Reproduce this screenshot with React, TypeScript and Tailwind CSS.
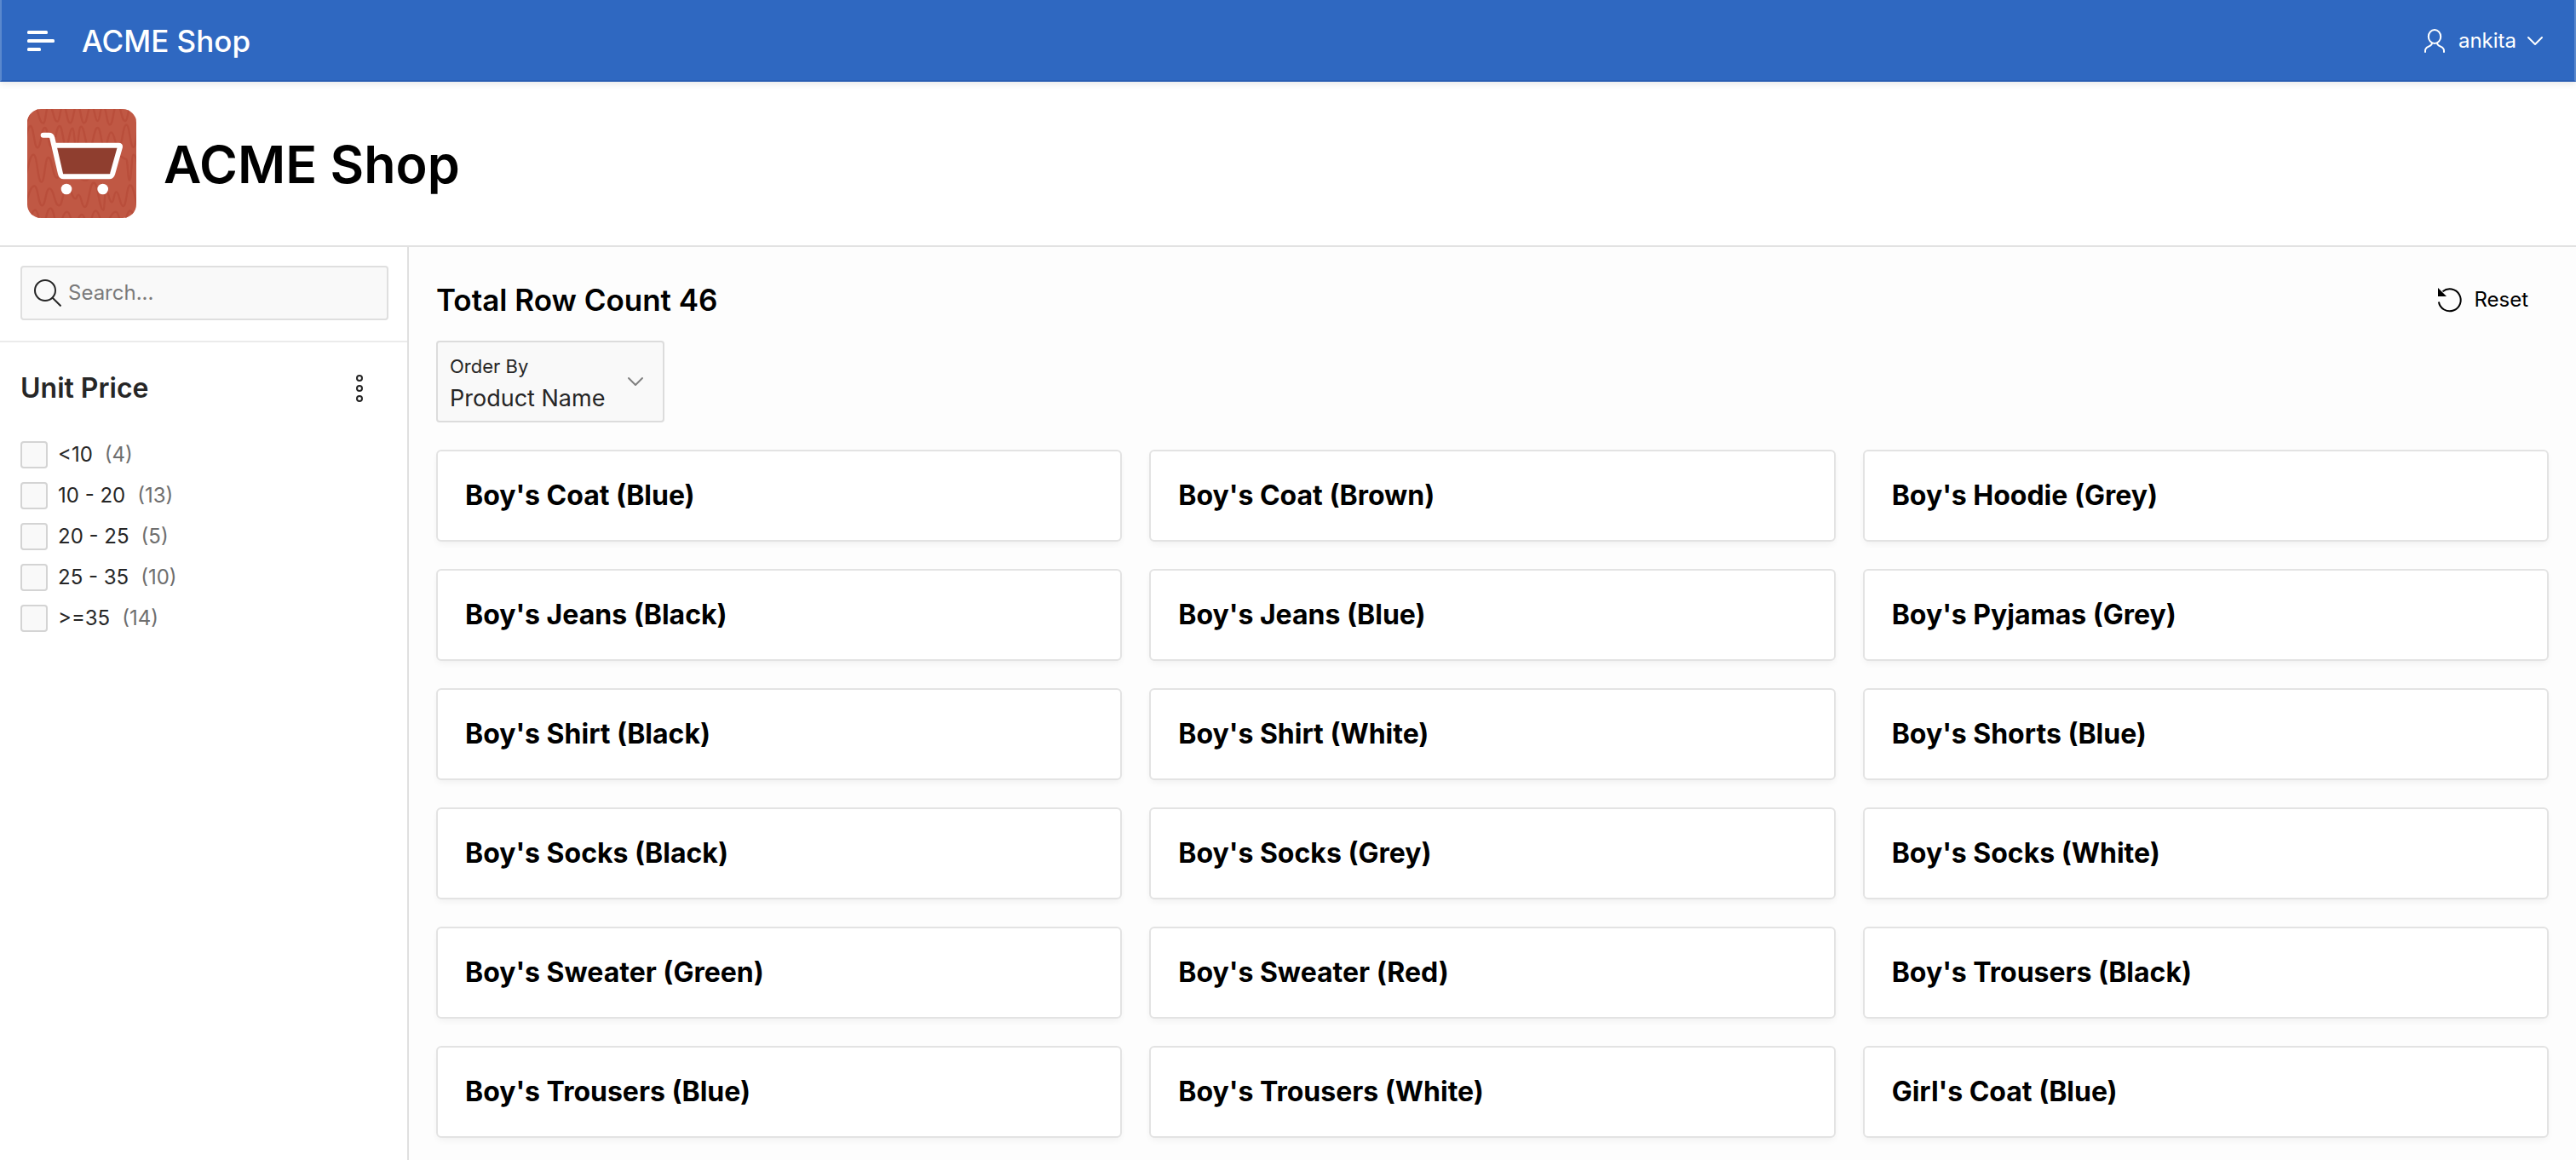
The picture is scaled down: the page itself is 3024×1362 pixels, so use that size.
const products = [
  "Boy's Coat (Blue)",
  "Boy's Coat (Brown)",
  "Boy's Hoodie (Grey)",
  "Boy's Jeans (Black)",
  "Boy's Jeans (Blue)",
  "Boy's Pyjamas (Grey)",
  "Boy's Shirt (Black)",
  "Boy's Shirt (White)",
  "Boy's Shorts (Blue)",
  "Boy's Socks (Black)",
  "Boy's Socks (Grey)",
  "Boy's Socks (White)",
  "Boy's Sweater (Green)",
  "Boy's Sweater (Red)",
  "Boy's Trousers (Black)",
  "Boy's Trousers (Blue)",
  "Boy's Trousers (White)",
  "Girl's Coat (Blue)",
];

const priceRanges = [
  { label: "<10", count: 4 },
  { label: "10 - 20", count: 13 },
  { label: "20 - 25", count: 5 },
  { label: "25 - 35", count: 10 },
  { label: ">=35", count: 14 },
];

type Point = [number, number];

// Turning points of the hand-drawn waves behind the cart.
const waves: Point[][] = [
  [[30, 70], [58, 10], [92, 74], [112, 10], [142, 68], [162, 10], [187, 73], [212, 8], [236, 73], [262, 10], [284, 66], [302, 10], [327, 79], [352, 8], [381, 66], [402, 10], [430, 70]],
  [[20, 150], [47, 84], [72, 160], [98, 90], [122, 158], [150, 84], [172, 150], [196, 92], [208, 158], [225, 86], [254, 160], [284, 90], [308, 158], [331, 106], [358, 158], [385, 80], [410, 158], [430, 90]],
  [[20, 270], [58, 185], [86, 281], [110, 195], [140, 266], [170, 200], [240, 275], [300, 200], [360, 190], [384, 200], [396, 275], [410, 185], [440, 270]],
  [[20, 360], [61, 295], [88, 364], [114, 304], [148, 364], [176, 296], [206, 340], [216, 326], [238, 369], [270, 284], [305, 380], [312, 310], [334, 352], [349, 316], [374, 366], [398, 292], [430, 362]],
  [[30, 440], [64, 380], [88, 430], [118, 374], [144, 430], [176, 386], [202, 430], [228, 396], [250, 430], [277, 382], [306, 430], [348, 386], [372, 430], [398, 382], [430, 430]],
];

function wavePath(points: Point[]) {
  return points
    .map(([x, y], i) => {
      if (i === 0) return `M${x} ${y}`;
      const [px, py] = points[i - 1];
      const d = (x - px) / 2;
      return `C${px + d} ${py} ${x - d} ${y} ${x} ${y}`;
    })
    .join(" ");
}

function ShopLogo() {
  return (
    <svg viewBox="36 24 384 384" className="size-32 shrink-0 rounded-2xl" aria-hidden="true">
      <rect x="36" y="24" width="384" height="384" fill="#c05844" />
      <g fill="none" stroke="#b94e3b" strokeWidth="7" strokeLinecap="round">
        {waves.map((w, i) => (
          <path key={i} d={wavePath(w)} />
        ))}
      </g>
      <path d="M135 152H362L334 261H157Z" fill="#8f3e2f" />
      <g fill="none" stroke="#fff" strokeWidth="18" strokeLinecap="round" strokeLinejoin="round">
        <path d="M92 116H112Q122 116 124 126L153 252Q155 262 164 262H325Q333 262 336 253L363 157Q364 152 358 152H137" />
      </g>
      <circle cx="174" cy="306" r="19" fill="#fff" />
      <circle cx="302" cy="306" r="19" fill="#fff" />
    </svg>
  );
}

function MenuIcon() {
  return (
    <svg viewBox="0 0 32 32" className="size-8" fill="#fff" aria-hidden="true">
      <rect x="0" y="4" width="24" height="4" rx="1.5" />
      <rect x="0" y="14" width="32" height="4" rx="1.5" />
      <rect x="0" y="24" width="16" height="4" rx="1.5" />
    </svg>
  );
}

function UserIcon() {
  return (
    <svg viewBox="0 0 32 32" className="size-8" fill="none" stroke="#fff" strokeWidth="2" strokeLinecap="round" aria-hidden="true">
      <ellipse cx="16" cy="11" rx="7.2" ry="8" />
      <path d="M5 29V27.5C5 24.6 6.6 23.6 9 22.6C11.4 21.6 13 20.8 13 18.8M27 29V27.5C27 24.6 25.4 23.6 23 22.6C20.6 21.6 19 20.8 19 18.8" />
    </svg>
  );
}

function ChevronIcon({ className }: { className: string }) {
  return (
    <svg viewBox="0 0 20 12" className={className} fill="none" stroke="currentColor" strokeWidth="2" strokeLinecap="round" strokeLinejoin="round" aria-hidden="true">
      <path d="M2 2L10 10L18 2" />
    </svg>
  );
}

function SearchIcon() {
  return (
    <svg viewBox="0 0 32 32" className="size-8 shrink-0" fill="none" stroke="#262626" strokeWidth="2" aria-hidden="true">
      <circle cx="13" cy="13" r="12" />
      <path d="M21.5 21.5L31.5 31.5" />
    </svg>
  );
}

function ResetIcon() {
  return (
    <svg viewBox="0 0 32 32" className="size-8" aria-hidden="true">
      <path d="M2.9 18.5A13 13 0 1 0 7.5 6.2" fill="none" stroke="#000" strokeWidth="2" />
      <path d="M2 2L12 12H2Z" fill="#000" />
    </svg>
  );
}

function MoreIcon() {
  return (
    <svg viewBox="0 0 32 32" className="size-8" fill="none" stroke="#262626" strokeWidth="2" aria-hidden="true">
      <circle cx="16" cy="4" r="3" />
      <circle cx="16" cy="16" r="3" />
      <circle cx="16" cy="28" r="3" />
    </svg>
  );
}

export default function App() {
  return (
    <div className="flex min-h-screen flex-col bg-white font-[Inter,'Liberation_Sans',sans-serif] text-[#262626]">
      <header className="z-10 flex h-24 items-center justify-between border-x-2 border-b-2 border-x-[#5a88cd] border-b-[#2a5eb3] bg-[#2f68c1] pt-0.5 pr-9 pl-[30px] text-white shadow-[0_2px_8px_rgba(0,0,0,0.1)]">
        <div className="flex items-center gap-8">
          <button type="button" aria-label="Main navigation">
            <MenuIcon />
          </button>
          <a href="#home" className="text-[35px] leading-10 font-medium">
            ACME Shop
          </a>
        </div>
        <button type="button" className="flex items-center text-2xl">
          <UserIcon />
          <span className="ml-3">ankita</span>
          <ChevronIcon className="ml-3 h-3 w-5" />
        </button>
      </header>

      <section className="flex items-center gap-8 border-b-2 border-[#e2e2e2] bg-white p-8">
        <ShopLogo />
        <h1 className="pt-0.5 text-[61px] leading-[72px] font-semibold text-black">ACME Shop</h1>
      </section>

      <div className="flex flex-1">
        <aside className="w-120 shrink-0 border-r-2 border-[#e0e0e0]">
          <div className="border-b-2 border-[#ebebeb] pt-[22px] pr-[22px] pb-6 pl-6">
            <label className="flex h-16 items-center gap-2 rounded-sm border-2 border-[#dfdfdf] bg-[#f9f9f9] px-3.5">
              <SearchIcon />
              <input
                type="search"
                aria-label="Search"
                placeholder="Search..."
                className="min-w-0 flex-1 bg-transparent text-2xl outline-none placeholder:text-[#7a7a7a]"
              />
            </label>
          </div>
          <div className="flex items-center justify-between pt-[30px] pr-10 pl-6">
            <h2 className="text-[32px] leading-12 font-semibold">Unit Price</h2>
            <button type="button" aria-label="Unit Price options">
              <MoreIcon />
            </button>
          </div>
          <ul className="flex flex-col gap-4 px-6 pt-[38px]">
            {priceRanges.map((r) => (
              <li key={r.label}>
                <label className="flex items-center text-2xl leading-8">
                  <input
                    type="checkbox"
                    className="size-8 appearance-none rounded-sm border-2 border-[#d4d4d4] bg-[#f9f9f9] checked:bg-[#2f68c1]"
                  />
                  <span className="ml-3">{r.label}</span>
                  <span className="ml-3.5 text-[#6e6e6e]">({r.count})</span>
                </label>
              </li>
            ))}
          </ul>
        </aside>

        <main className="min-w-0 flex-1 bg-[#fdfdfd] px-8 pt-[30px] pb-6">
          <div className="flex h-16 items-center justify-between pr-6">
            <h2 className="text-[35px] leading-10 font-semibold text-black">Total Row Count 46</h2>
            <button type="button" className="flex items-center gap-3 text-2xl text-black">
              <ResetIcon />
              Reset
            </button>
          </div>
          <div className="mt-4 flex h-24 w-[268px] items-center justify-between rounded-sm border-2 border-[#dcdcdc] bg-[#f9f9f9] pr-[22px] pl-3.5">
            <div className="flex flex-col pt-2">
              <label htmlFor="order-by" className="text-[22px] leading-8">
                Order By
              </label>
              <select id="order-by" className="h-11 w-48 appearance-none bg-transparent text-[27px] outline-none">
                <option>Product Name</option>
              </select>
            </div>
            <ChevronIcon className="h-3 w-5 text-[#808080]" />
          </div>
          <ul className="mt-8 grid grid-cols-3 gap-8">
            {products.map((name) => (
              <li
                key={name}
                className="flex h-27 items-center rounded-md border-2 border-[#e3e3e3] bg-white px-8 shadow-[0_4px_8px_-2px_rgba(0,0,0,0.06)]"
              >
                <h3 className="text-[32px] leading-10 font-bold text-black">{name}</h3>
              </li>
            ))}
          </ul>
        </main>
      </div>
    </div>
  );
}
